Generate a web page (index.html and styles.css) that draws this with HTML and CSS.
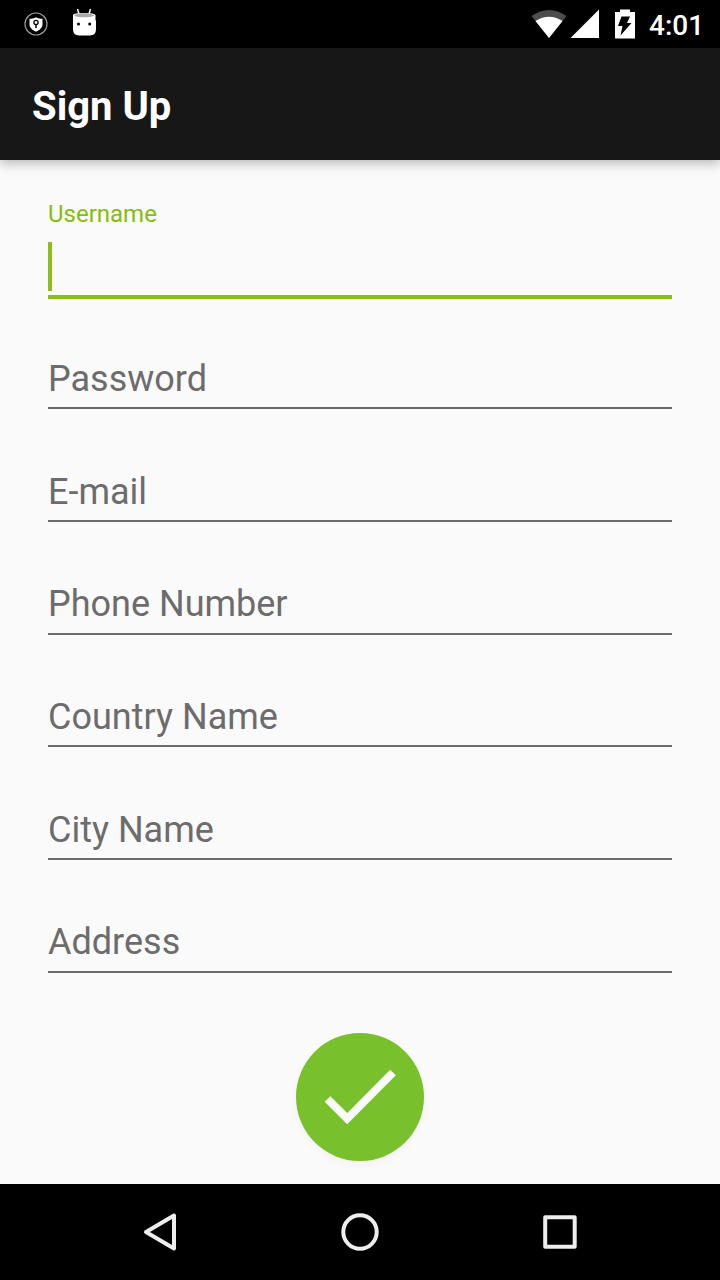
FILE: index.html
```html
<!DOCTYPE html>
<html lang="en">

<head>
    <meta charset="UTF-8">
    <meta name="viewport" content="width=device-width, initial-scale=1.0">
    <title>Sign Up</title>
    <link rel="stylesheet" href="styles.css">
</head>

<body>
    <div class="status-bar">
        <svg class="status-left" width="110" height="48" viewBox="0 0 110 48">
            <circle cx="36" cy="24" r="11" fill="none" stroke="#999" stroke-width="1.2"/>
            <path d="M36 17.3c2 1.3 4 1.5 6.5 1.5v5.2c0 3.5-2.5 6-6.5 7.7c-4-1.7-6.5-4.2-6.5-7.7v-5.2c2.5 0 4.5-.2 6.5-1.5z" fill="#fff"/>
            <circle cx="36" cy="22.5" r="2.1" fill="#fff" stroke="#000" stroke-width="1.3"/>
            <path d="M36 24.5v3.5" stroke="#000" stroke-width="1.5"/>
            <path d="M77.5 9l1.5 5M90.5 9l-1.5 5" stroke="#fff" stroke-width="1.5"/>
            <path d="M73 15q0-2 11-2t11.5 2v5l.5 1v8q0 6.5-6 6.5h-11q-6 0-6-6.5v-8z" fill="#fff"/>
            <ellipse cx="84.2" cy="15.3" rx="10" ry="2" fill="#aaa"/>
            <circle cx="78.5" cy="24" r="1.5"/>
            <circle cx="89.7" cy="24" r="1.5"/>
        </svg>
        <svg class="status-right" width="110" height="48" viewBox="530 0 110 48">
            <path d="M549 38L531.5 16Q549 4 566.5 16z" fill="#4d4d4d"/>
            <path d="M549 38L535.5 21Q549 12.5 562.5 21z" fill="#fff"/>
            <path d="M599 9.5v28.5h-28.5z" fill="#fff"/>
            <path d="M620 9.5h10v2.5h5v26.5h-20v-26.5h5z" fill="#fff"/>
            <path d="M621.5 16.5h8.5l-3 6.5h4.5l-11 12.5 2-9.5h-4.5z"/>
        </svg>
        <span class="clock">4:01</span>
    </div>

    <header class="toolbar">
        <h1>Sign Up</h1>
    </header>

    <form class="signup-form">
        <div class="field active">
            <label>Username</label>
            <div class="cursor"></div>
        </div>
        <div class="fields">
            <div class="field"><label>Password</label></div>
            <div class="field"><label>E-mail</label></div>
            <div class="field"><label>Phone Number</label></div>
            <div class="field"><label>Country Name</label></div>
            <div class="field"><label>City Name</label></div>
            <div class="field"><label>Address</label></div>
        </div>

        <button class="submit" type="button" aria-label="Sign up">
            <svg width="128" height="128" viewBox="0 0 128 128">
                <path d="M31.5 66l19.7 19.7L97 39.5" fill="none" stroke="#fafafa" stroke-width="8"/>
            </svg>
        </button>
    </form>

    <nav class="nav-bar">
        <svg width="720" height="96" viewBox="0 0 720 96">
            <g fill="none" stroke="#eee" stroke-width="4" stroke-linejoin="round">
                <path d="M174 31.5v33L146 48z"/>
                <circle cx="360" cy="48" r="16.7"/>
                <rect x="545.2" y="33.2" width="29.5" height="29.5"/>
            </g>
        </svg>
    </nav>
</body>

</html>
```
FILE: styles.css
```css
body {
    margin: 0;
    width: 720px;
    height: 1280px;
    display: flex;
    flex-direction: column;
    background-color: #fafafa;
    font-family: Roboto, sans-serif;
}

svg {
    display: block;
}

.status-bar {
    height: 48px;
    display: flex;
    background-color: #000;
}

.status-right {
    margin-left: auto;
}

.clock {
    width: 71px;
    padding-left: 9px;
    color: #fff;
    font-size: 28px;
    font-weight: 500;
    line-height: 51px;
}

.toolbar {
    height: 112px;
    padding-left: 32px;
    background-color: #171717;
    box-shadow: 0 4px 10px rgba(0, 0, 0, 0.25);
}

h1 {
    margin: 0;
    color: #fff;
    font-size: 40px;
    font-weight: 700;
    line-height: 117px;
}

.signup-form {
    flex: 1;
    display: flex;
    flex-direction: column;
    padding: 0 48px;
}

.fields {
    margin-top: -2.3px;
}

.field {
    box-sizing: border-box;
    height: 112.65px;
    padding-bottom: 6.4px;
    display: flex;
    flex-direction: column;
    justify-content: flex-end;
    border-bottom: 2px solid #6c6c6c;
    color: #6c6c6c;
    font-size: 36px;
    line-height: 44px;
}

.field.active {
    height: 139px;
    padding-bottom: 4px;
    border-bottom: 4px solid #89bd1a;
    color: #84bd0a;
    font-size: 24px;
    line-height: 28px;
}

.cursor {
    width: 4px;
    height: 49px;
    margin-top: 14px;
    background-color: #89c017;
}

.submit {
    width: 128px;
    height: 128px;
    margin: 60.4px auto 0;
    padding: 0;
    border: none;
    border-radius: 50%;
    background-color: #78c02c;
    box-shadow: 0 4px 8px rgba(0, 0, 0, 0.03);
}

.nav-bar {
    height: 96px;
    background-color: #000;
}
```
